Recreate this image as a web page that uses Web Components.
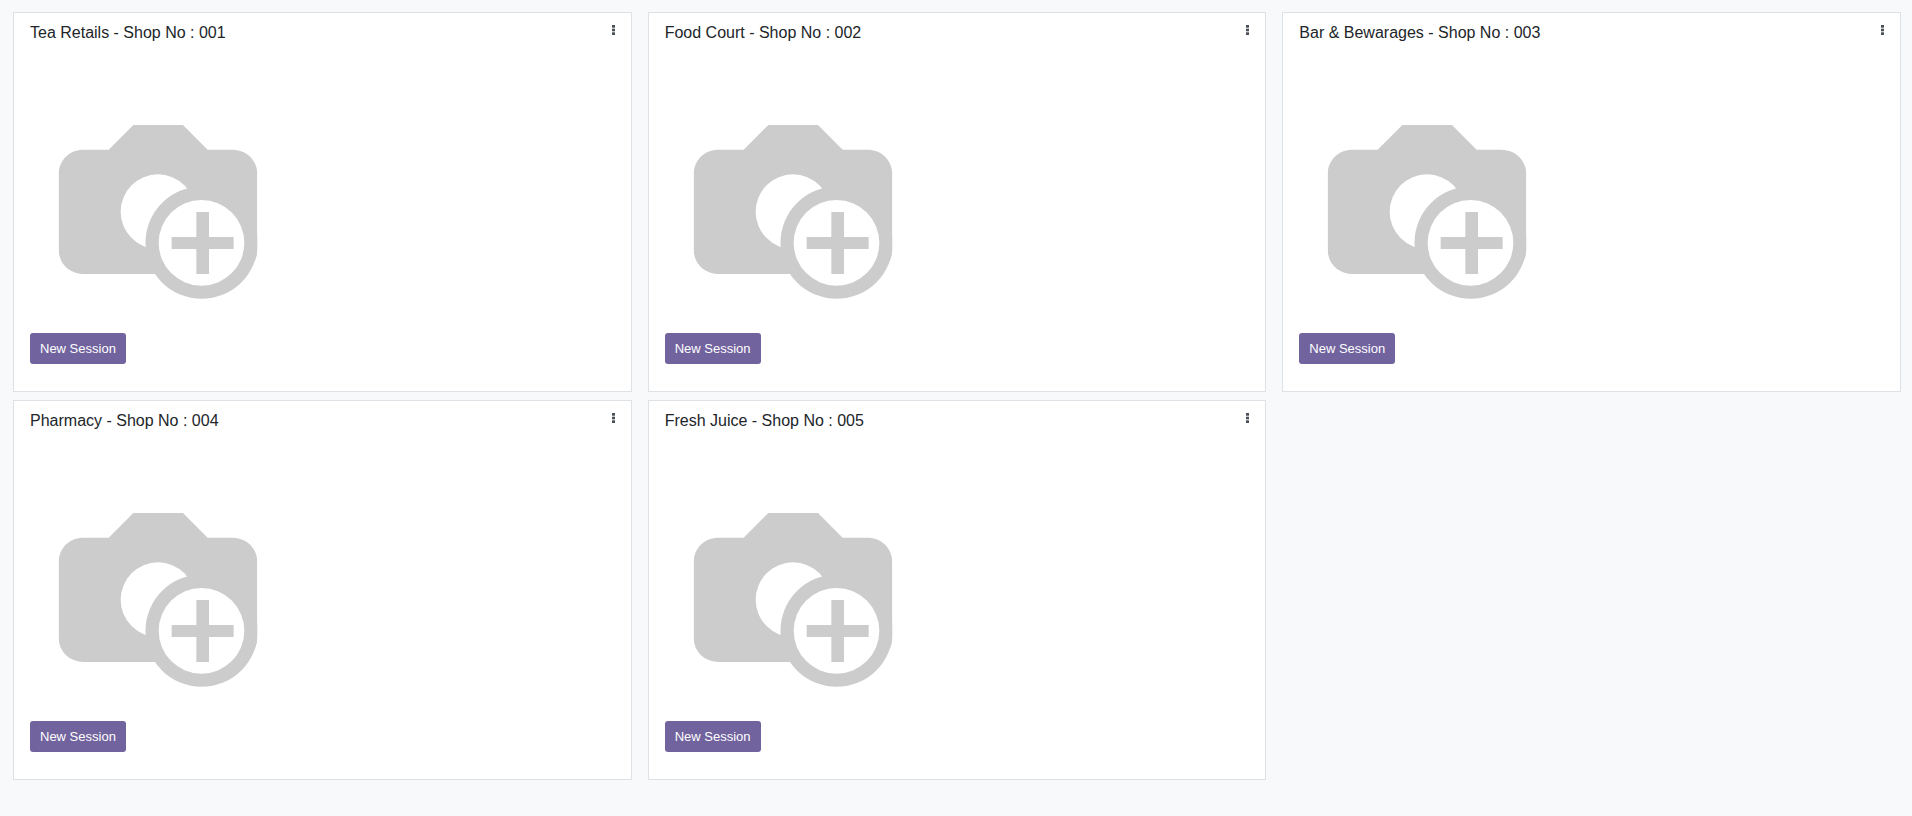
<!DOCTYPE html>
<html lang="en">
<head>
<meta charset="utf-8">
<title>Point of Sale</title>
<style>
body { margin: 0; background: #f8f9fa; color: #212529; font: 16px/24px "Liberation Sans", Arial, sans-serif; }
</style>
</head>
<body>
<shop-board>
  <shop-card>Tea Retails - Shop No : 001</shop-card>
  <shop-card>Food Court - Shop No : 002</shop-card>
  <shop-card>Bar &amp; Bewarages - Shop No : 003</shop-card>
  <shop-card>Pharmacy - Shop No : 004</shop-card>
  <shop-card>Fresh Juice - Shop No : 005</shop-card>
</shop-board>

<template id="board-template">
  <style>
    :host { display: block; padding: 12px 11px 36px 13px; }
    main { display: grid; grid-template-columns: repeat(3, minmax(0, 1fr)); gap: 8px 16px; }
  </style>
  <main><slot></slot></main>
</template>

<template id="card-template">
  <style>
    :host { display: block; }
    article { display: flex; flex-direction: column; align-items: flex-start; padding: 8px 16px 27px; background: #fff; border: 1px solid #dee2e6; }
    header { display: flex; align-self: stretch; align-items: flex-start; justify-content: space-between; }
    h2 { margin: 0; font-size: 16px; font-weight: 400; line-height: 24px; }
    placeholder-photo { margin: 65px 0 23px 10px; }
  </style>
  <article>
    <header><h2><slot></slot></h2><kebab-button></kebab-button></header>
    <placeholder-photo></placeholder-photo>
    <session-button>New Session</session-button>
  </article>
</template>

<template id="kebab-template">
  <style>
    :host { display: block; }
    button { display: block; margin: 0; padding: 4px 0; border: 0; background: none; color: #495057; cursor: pointer; }
    svg { display: block; }
  </style>
  <button type="button" aria-label="Shop menu">
    <svg width="3" height="10" viewBox="0 0 3 10" fill="currentColor" aria-hidden="true">
      <rect width="3" height="2.700"/><rect y="3.700" width="3" height="2.600"/><rect y="7.300" width="3" height="2.700"/>
    </svg>
  </button>
</template>

<template id="photo-template">
  <style>
    :host { display: block; }
    svg { display: block; }
  </style>
  <svg width="230" height="200" viewBox="0 0 690 600" role="img" aria-label="No photo">
    <clipPath id="frame"><rect x="56" y="45" width="596" height="523"/></clipPath>
    <g clip-path="url(#frame)">
      <path fill="#ccc" d="M280 45H429L503 119H576C620 119 652 150 652 194V418C652 461 620 492 576 492H132C88 492 56 461 56 418V194C56 150 88 119 132 119H206Z"/>
      <circle cx="354" cy="305" r="112" fill="#fff"/>
      <circle cx="485" cy="398" r="168.500" fill="#ccc"/>
      <circle cx="484.500" cy="398.500" r="128.500" fill="#fff"/>
      <path fill="#ccc" d="M469 306H507V381H581V417H507V492H469V417H395V381H469Z"/>
    </g>
  </svg>
</template>

<template id="session-template">
  <style>
    :host { display: block; }
    button { display: block; margin: 0; padding: 5px 10px; border: 0; border-radius: 3px; background: #71639e; color: #fff; font: 13px/21px "Liberation Sans", Arial, sans-serif; cursor: pointer; }
  </style>
  <button type="button"><slot></slot></button>
</template>

<script>
class TemplateElement extends HTMLElement {
  constructor() {
    super();
    const template = document.getElementById(this.constructor.templateId);
    this.attachShadow({ mode: "open" }).append(template.content.cloneNode(true));
  }
}
class ShopBoard extends TemplateElement { static templateId = "board-template"; }
class ShopCard extends TemplateElement { static templateId = "card-template"; }
class KebabButton extends TemplateElement { static templateId = "kebab-template"; }
class PlaceholderPhoto extends TemplateElement { static templateId = "photo-template"; }
class SessionButton extends TemplateElement { static templateId = "session-template"; }

customElements.define("kebab-button", KebabButton);
customElements.define("placeholder-photo", PlaceholderPhoto);
customElements.define("session-button", SessionButton);
customElements.define("shop-card", ShopCard);
customElements.define("shop-board", ShopBoard);
</script>
</body>
</html>
